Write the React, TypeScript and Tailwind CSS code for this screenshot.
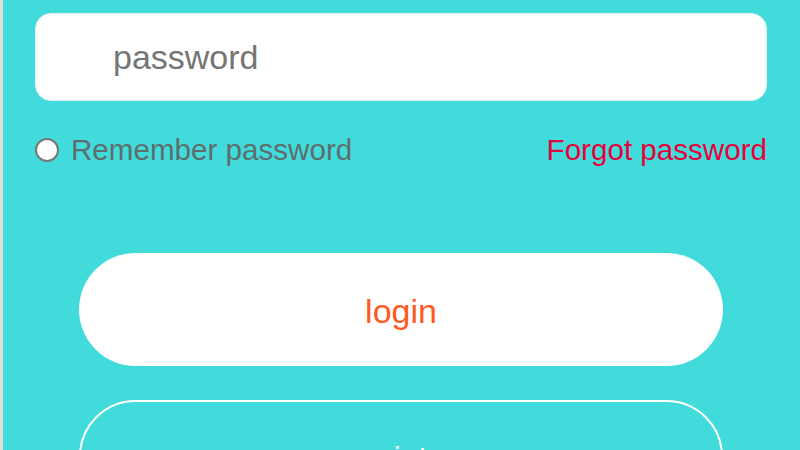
export default function App() {
  return (
    <div className="h-[450px] w-[800px] overflow-hidden border-l-[3px] border-[#dedede] bg-[#41dbdc] font-['Liberation_Sans',Arial,sans-serif]">
      <div className="pt-[13px] pl-[32px] pr-[33px]">
        {/* Password field */}
        <div className="flex h-[88px] items-center rounded-[16px] border border-[#e4f1f1] bg-white pl-[77px]">
          <input
            type="password"
            placeholder="password"
            className="w-full bg-transparent text-[34px] text-[#333] placeholder-[#757575] outline-none"
          />
        </div>

        {/* Remember / forgot row */}
        <div className="mt-[32px] flex h-[34px] items-center justify-between">
          <label className="flex items-center gap-[12px] text-[29.6px] text-[#5e6e6e]">
            <span className="block h-[24px] w-[24px] rounded-full border-2 border-[#767676] bg-white" />
            Remember password
          </label>
          <a className="text-[29.6px] text-[#e8003a]">Forgot password</a>
        </div>

        {/* Buttons */}
        <div className="mt-[86px] flex flex-col gap-[34px] px-[44px]">
          <button className="flex h-[113px] items-center justify-center rounded-full bg-white pt-[4px] text-[34px] text-[#ff5a1f]">
            login
          </button>
          <button className="flex h-[113px] items-center justify-center rounded-full border-2 border-white pt-[4px] text-[34px] text-white">
            register
          </button>
        </div>
      </div>
    </div>
  );
}
